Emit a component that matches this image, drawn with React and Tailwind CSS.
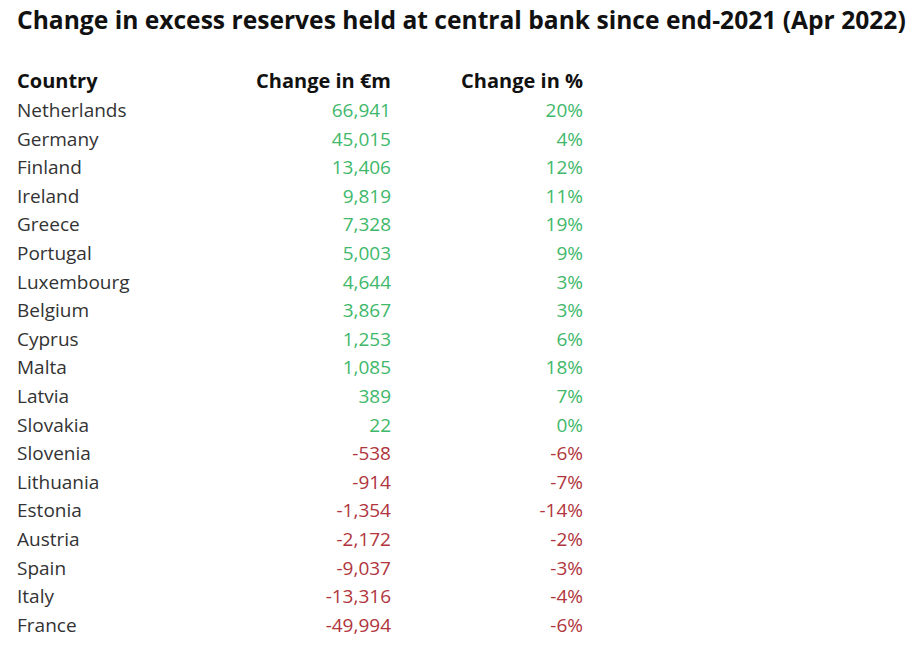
import React from "react";

const rows = [
  ["Netherlands", "66,941", "20%"],
  ["Germany", "45,015", "4%"],
  ["Finland", "13,406", "12%"],
  ["Ireland", "9,819", "11%"],
  ["Greece", "7,328", "19%"],
  ["Portugal", "5,003", "9%"],
  ["Luxembourg", "4,644", "3%"],
  ["Belgium", "3,867", "3%"],
  ["Cyprus", "1,253", "6%"],
  ["Malta", "1,085", "18%"],
  ["Latvia", "389", "7%"],
  ["Slovakia", "22", "0%"],
  ["Slovenia", "-538", "-6%"],
  ["Lithuania", "-914", "-7%"],
  ["Estonia", "-1,354", "-14%"],
  ["Austria", "-2,172", "-2%"],
  ["Spain", "-9,037", "-3%"],
  ["Italy", "-13,316", "-4%"],
  ["France", "-49,994", "-6%"],
];

export default function App() {
  return (
    <div className="w-[924px] h-[653px] bg-white text-[#222] font-['Open_Sans',sans-serif] pl-[17px] pt-[2px]">
      <h1 className="text-[24.6px] font-bold leading-[36px] text-[#111] whitespace-nowrap">
        Change in excess reserves held at central bank since end-2021 (Apr 2022)
      </h1>
      <table className="mt-[28px] text-[19px] text-[#333]">
        <thead>
          <tr className="h-[29px]">
            <th className="text-left font-bold text-[#111] w-[200px] p-0 text-[20px]">Country</th>
            <th className="text-right font-bold text-[#111] w-[174px] p-0 text-[20px]">Change in €m</th>
            <th className="text-right font-bold text-[#111] w-[192px] p-0 text-[20px]">Change in %</th>
          </tr>
        </thead>
        <tbody>
          {rows.map(([c, v, p]) => {
            const neg = v.startsWith("-");
            const col = neg ? "text-[#b0353c]" : "text-[#40b86a]";
            return (
              <tr key={c} className="h-[28.6px]">
                <td className="p-0 font-normal">{c}</td>
                <td className={`p-0 text-right ${col}`}>{v}</td>
                <td className={`p-0 text-right ${col}`}>{p}</td>
              </tr>
            );
          })}
        </tbody>
      </table>
    </div>
  );
}
